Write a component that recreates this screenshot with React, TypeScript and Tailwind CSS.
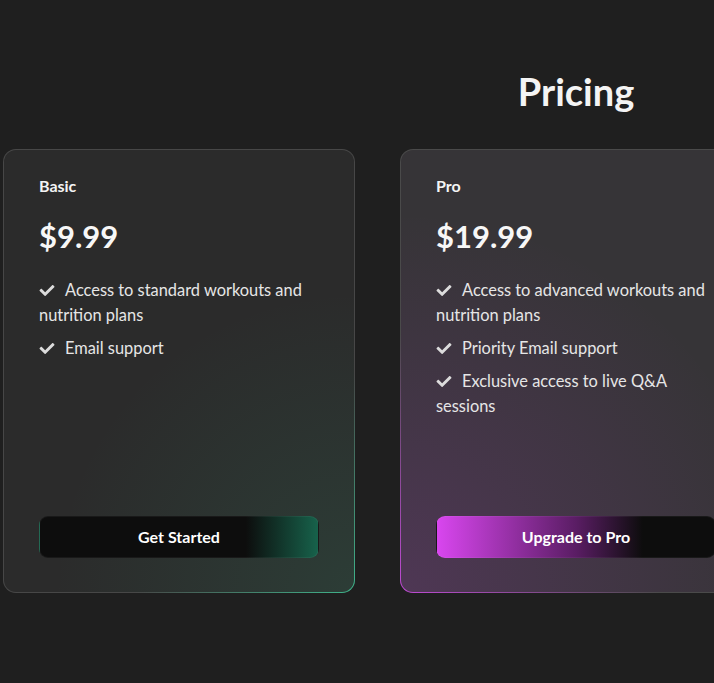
import { FaCheck } from "react-icons/fa";

type Plan = {
  name: string;
  price: string;
  features: string[];
  cta: string;
  variant: "basic" | "pro" | "elite";
};

const plans: Plan[] = [
  {
    name: "Basic",
    price: "$9.99",
    features: ["Access to standard workouts and nutrition plans", "Email support"],
    cta: "Get Started",
    variant: "basic",
  },
  {
    name: "Pro",
    price: "$19.99",
    features: [
      "Access to advanced workouts and nutrition plans",
      "Priority Email support",
      "Exclusive access to live Q&A sessions",
    ],
    cta: "Upgrade to Pro",
    variant: "pro",
  },
  {
    name: "Ultimate",
    price: "$29.99",
    features: [
      "Access to all premium workouts and nutrition plans",
      "24/7 Priority support",
      "1-on-1 virtual coaching session every month",
      "Exclusive content and early access to new features",
    ],
    cta: "Go Ultimate",
    variant: "elite",
  },
];

// outer 1px ring, tinted toward the glow corner
const frame = {
  basic: "bg-[#474747] bg-[radial-gradient(220px_circle_at_100%_100%,#3fb58c,transparent)]",
  pro: "bg-[#4a4a4a] bg-[radial-gradient(260px_circle_at_0%_100%,#c04ad6,transparent)]",
  elite: "bg-[#474747]",
};

const surface = {
  basic:
    "bg-[#2b2b2b] bg-[radial-gradient(300px_circle_at_100%_100%,rgba(52,180,130,0.13),transparent)]",
  pro: "bg-[#363437] bg-[radial-gradient(380px_circle_at_0%_100%,rgba(200,70,230,0.17),transparent)]",
  elite: "bg-[#2b2b2b]",
};

const button = {
  basic:
    "bg-[linear-gradient(to_right,#0d0d0d_74%,#17624b_100%)] border border-white/5",
  pro: "bg-[linear-gradient(to_right,#d946ef_0%,#5a1d64_50%,#0d0d0d_74%)] border border-white/5",
  elite: "bg-[linear-gradient(to_right,#0d0d0d_74%,#1e3a8a_100%)] border border-white/5",
};

function PlanCard({ plan }: { plan: Plan }) {
  return (
    <div className={`w-[352px] h-[444px] rounded-[13px] p-px ${frame[plan.variant]}`}>
      <div
        className={`flex h-full flex-col rounded-[12px] px-[35px] pt-[24px] pb-[34px] ${surface[plan.variant]}`}
      >
        <h3 className="text-[16px] font-bold leading-6 text-[#f4f4f4]">{plan.name}</h3>
        <div className="mt-[20px] text-[31px] font-bold leading-[36px] text-[#f7f7f7]">
          {plan.price}
        </div>
        <ul className="mt-[23px] flex flex-col gap-[8px]">
          {plan.features.map((f) => (
            <li key={f} className="text-[16.4px] leading-[25px] text-[#e6e6e6]">
              <FaCheck className="mr-[10px] inline-block h-[15px] w-[16px] -translate-y-[1px] align-middle text-[#dcdcdc]" />
              {f}
            </li>
          ))}
        </ul>
        <button
          className={`mt-auto h-[42px] w-full rounded-[9px] text-[16px] font-bold text-white ${button[plan.variant]}`}
        >
          {plan.cta}
        </button>
      </div>
    </div>
  );
}

export default function App() {
  return (
    <div
      className="h-screen w-full overflow-hidden bg-[#1f1f1f]"
      style={{ fontFamily: "Lato, 'Noto Sans', sans-serif" }}
    >
      <div className="flex w-[1152px] flex-col items-center pt-[65px]">
        <h2 className="text-[38px] font-bold leading-[52px] text-[#f4f4f4]">Pricing</h2>
        <div className="mt-[32px] flex gap-[45px]">
          {plans.map((p) => (
            <PlanCard key={p.name} plan={p} />
          ))}
        </div>
      </div>
    </div>
  );
}
